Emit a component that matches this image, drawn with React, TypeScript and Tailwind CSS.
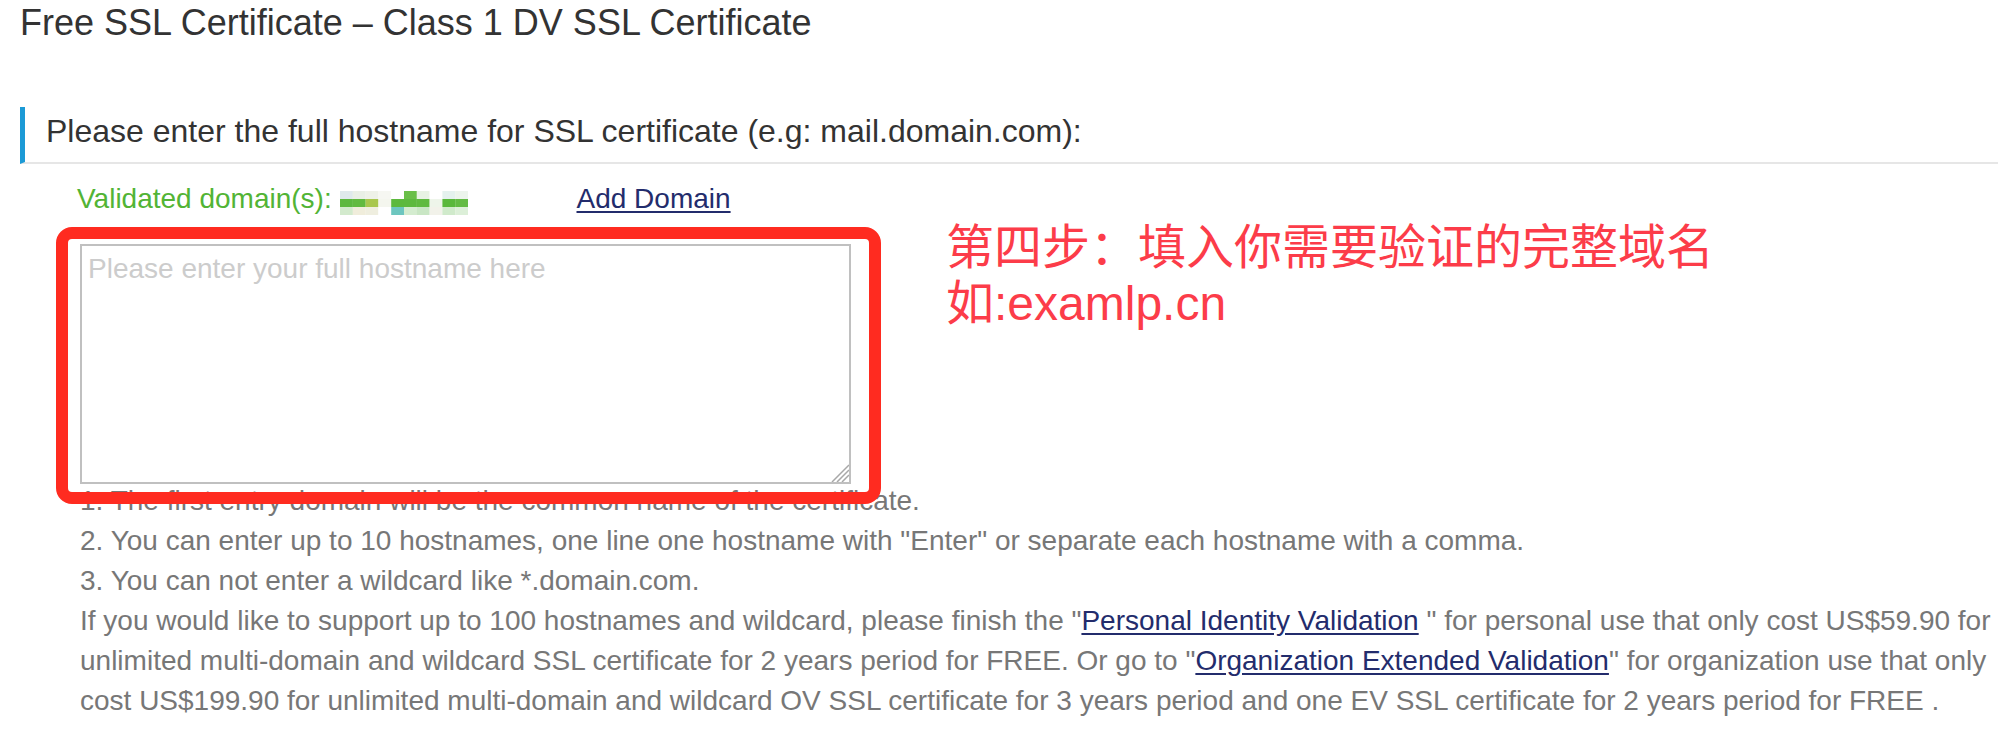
const mosaic: string[][] = [
  ["#dfe9ec", "#e9efe6", "#eef1e8", "#f6f7f2", "#ffffff", "#6abf48", "#e8f2e4", "#ffffff", "#e4f1ee", "#ecf4ec"],
  ["#5db83f", "#62ba40", "#a9c74e", "#f4f6ee", "#5cb93d", "#5db93e", "#60ba40", "#eef5ea", "#5ab83c", "#63bb44"],
  ["#d3eacd", "#f0eddb", "#efeedf", "#ffffff", "#6dc6bf", "#d4eccf", "#c9e6c4", "#f2f2ea", "#d0eacb", "#dcefd8"],
];

function BlurredDomain() {
  return (
    <svg width="128" height="24" viewBox="0 0 128 24" className="inline-block align-[-7px]">
      {mosaic.map((row, r) =>
        row.map((c, i) => (
          <rect key={`${r}-${i}`} x={i * 12.8} y={r * 8} width="12.9" height="8.1" fill={c} />
        ))
      )}
    </svg>
  );
}

function Link({ children }: { children: React.ReactNode }) {
  return <a className="cursor-pointer text-[#232c6c] underline underline-offset-[3px]">{children}</a>;
}

export default function App() {
  return (
    <div className="h-[744px] w-full overflow-hidden bg-white font-['Liberation_Sans','Noto_Sans_CJK_SC',sans-serif]">
      <h3 className="pl-[20px] pt-[3px] text-[36px] leading-[40px] text-[#333333]">
        Free SSL Certificate – Class 1 DV SSL Certificate
      </h3>

      <div className="ml-[20px] mt-[64px] border-b-2 border-l-[5px] border-b-[#e6e6e6] border-l-[#1c9ad6] pb-[8px] pl-[21px] pt-[1px] text-[32px] leading-[46px] text-[#333333]">
        Please enter the full hostname for SSL certificate (e.g: mail.domain.com):
      </div>

      <div className="ml-[77px] mt-[15px] flex items-baseline whitespace-nowrap text-[28px] leading-[40px]">
        <span className="text-[#52b435]">
          Validated domain(s): <BlurredDomain />
        </span>
        <span className="ml-[109px]">
          <Link>Add Domain</Link>
        </span>
      </div>

      <div className="ml-[80px] mt-[25px] flex items-start">
        <div className="relative">
          <textarea
            placeholder="Please enter your full hostname here"
            className="block h-[240px] w-[771px] resize-none border-2 border-[#c0c0c0] px-[6px] pt-[3px] text-[28px] leading-[40px] text-[#555555] outline-none placeholder:text-[#cccccc]"
          />
          <svg width="20" height="20" viewBox="0 0 20 20" className="absolute bottom-[2px] right-[2px]">
            <path d="M3 20 L20 3 M8 20 L20 8 M13 20 L20 13" stroke="#a8a8a8" strokeWidth="1.5" fill="none" />
          </svg>
          <div className="pointer-events-none absolute left-[-24px] top-[-17px] z-10 h-[277px] w-[825px] rounded-[16px] border-[12px] border-[#ff2b20]" />
        </div>
        <div className="-mt-[24px] ml-[95px] whitespace-nowrap text-[48px] leading-[56px] text-[#fc3c49]">
          <div>第四步：填入你需要验证的完整域名</div>
          <div>如:examlp.cn</div>
        </div>
      </div>

      <div className="-mt-[3px] ml-[80px] whitespace-nowrap text-[28px] leading-[40px] text-[#777777]">
        <div>1. The first entry domain will be the common name of the certificate.</div>
        <div>2. You can enter up to 10 hostnames, one line one hostname with "Enter" or separate each hostname with a comma.</div>
        <div>3. You can not enter a wildcard like *.domain.com.</div>
        <div>
          If you would like to support up to 100 hostnames and wildcard, please finish the "<Link>Personal Identity Validation</Link> " for personal use that only cost US$59.90 for
        </div>
        <div>
          unlimited multi-domain and wildcard SSL certificate for 2 years period for FREE. Or go to "<Link>Organization Extended Validation</Link>" for organization use that only
        </div>
        <div>
          cost US$199.90 for unlimited multi-domain and wildcard OV SSL certificate for 3 years period and one EV SSL certificate for 2 years period for FREE .
        </div>
      </div>
    </div>
  );
}
